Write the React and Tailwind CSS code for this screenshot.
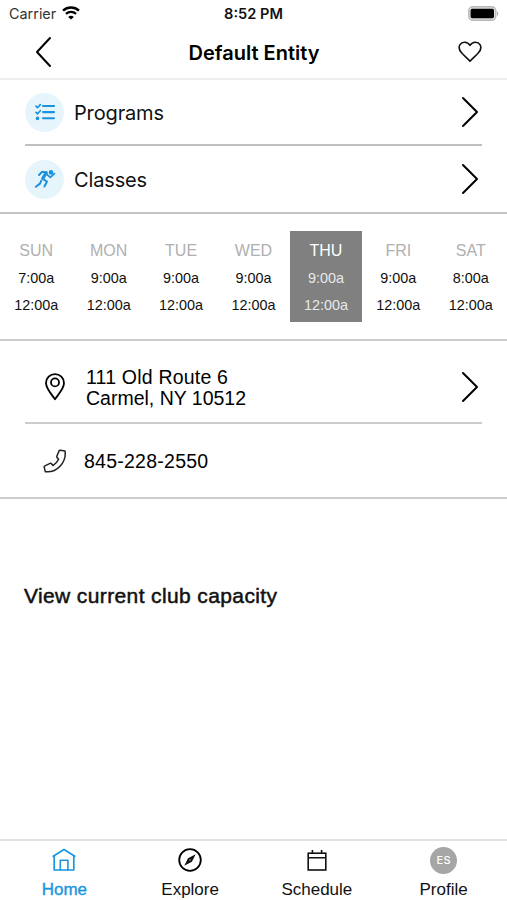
const HOURS = [
  { day: "SUN", open: "7:00a", close: "12:00a" },
  { day: "MON", open: "9:00a", close: "12:00a" },
  { day: "TUE", open: "9:00a", close: "12:00a" },
  { day: "WED", open: "9:00a", close: "12:00a" },
  { day: "THU", open: "9:00a", close: "12:00a", today: true },
  { day: "FRI", open: "9:00a", close: "12:00a" },
  { day: "SAT", open: "8:00a", close: "12:00a" },
]

const LINKS = [
  { label: "Programs", icon: ChecklistIcon, row: "h-[64px]" },
  { label: "Classes", icon: RunnerIcon, row: "h-[68px]" },
]

const TABS = [
  { label: "Home", icon: HomeIcon, active: true },
  { label: "Explore", icon: CompassIcon },
  { label: "Schedule", icon: CalendarIcon },
  { label: "Profile", icon: Avatar },
]

function WifiIcon() {
  return (
    <svg width="18" height="14" viewBox="0 0 18 14" fill="none" stroke="#000">
      <path d="M1 4.6C5.5 0.4 12.5 0.4 17 4.6" strokeWidth="2.4" />
      <path d="M3.9 7.9C6.8 5.3 11.2 5.3 14.1 7.9" strokeWidth="2.2" />
      <path d="M9 13.6 6.2 10.9C7.7 9.4 10.3 9.4 11.8 10.9Z" fill="#000" stroke="none" />
    </svg>
  )
}

function BatteryIcon() {
  return (
    <svg width="31" height="15" viewBox="0 0 31 15">
      <rect x="0.8" y="0.8" width="27" height="13.4" rx="4" fill="#ddd" stroke="#b8b8b8" strokeWidth="1.4" />
      <rect x="2.6" y="2.8" width="23.4" height="9.4" rx="1.6" fill="#000" />
      <path d="M29 5.2C30.7 5.8 30.7 9.2 29 9.8Z" fill="#aaa" />
    </svg>
  )
}

function HeartIcon() {
  return (
    <svg width="24" height="22" viewBox="0 0 24 22" fill="none" stroke="#111" strokeWidth="1.6" strokeLinejoin="round">
      <path d="M12 20.2C10.5 18.3 6.5 14.9 4 12.3C1.2 9.4 0.4 6.3 2 3.7C3.9 0.6 9.3 0.1 12 4.4C14.7 0.1 20.1 0.6 22 3.7C23.6 6.3 22.8 9.4 20 12.3C17.5 14.9 13.5 18.3 12 20.2Z" />
    </svg>
  )
}

function Chevron({ left }) {
  return (
    <svg width="18" height="32" viewBox="0 0 18 32" fill="none" stroke="#000" strokeWidth="2" strokeLinecap="round" strokeLinejoin="round">
      <path d={left ? "M15 2 2 16 15 30" : "M2 2 16 16 2 30"} />
    </svg>
  )
}

function ChecklistIcon() {
  return (
    <svg width="20" height="18" viewBox="0 0 20 18" fill="none" stroke="#1b93dd" strokeWidth="2.1" strokeLinecap="round" strokeLinejoin="round">
      <path d="M8 3H19M8 9.1H19M8 15.2H19" />
      <path d="M1 3.2 2.5 4.7 5.3 1.6M1 9.3 2.5 10.8 5.3 7.7" strokeWidth="1.7" />
      <circle cx="2.5" cy="15.4" r="1.8" fill="#1b93dd" stroke="none" />
    </svg>
  )
}

function RunnerIcon() {
  return (
    <svg width="22" height="20" viewBox="0 0 22 20" fill="none" stroke="#1b93dd" strokeWidth="2" strokeLinecap="round" strokeLinejoin="round">
      <circle cx="17" cy="3.4" r="2.3" fill="#1b93dd" stroke="none" />
      <path d="M5 6 8.2 2.8 12.6 3.4" />
      <path d="M12.2 3.8 8.8 9.4" strokeWidth="3.2" />
      <path d="M9 10 13 12.6 10.4 17.4" />
      <path d="M7.3 11.6 6 14.6 1.8 17.8" />
      <path d="M13.4 5.8 16.3 8.4 20.4 4.6" strokeWidth="1.8" />
    </svg>
  )
}

function PinIcon() {
  return (
    <svg width="20" height="28" viewBox="0 0 20 28" fill="none" stroke="#000" strokeWidth="1.8" strokeLinejoin="round">
      <path d="M10 26.3C7.8 22.7 1 16.2 1 10.1A9 9 0 0 1 19 10.1C19 16.2 12.2 22.7 10 26.3Z" />
      <circle cx="10" cy="9.4" r="4" />
    </svg>
  )
}

function PhoneIcon() {
  return (
    <svg width="24" height="24" viewBox="0 0 24 24" fill="none" stroke="#222" strokeWidth="1.5" strokeLinejoin="round">
      <path d="M17.3 1.2 22 2C23.8 12.8 14.2 24 2.3 22.7L1.2 18.1C1.1 17.4 1.3 17.1 1.9 16.9L7 14.4C7.7 14.1 8.2 14.3 8.5 14.8L9.9 16.6C12.4 15.2 14.3 13.1 15.6 10.3L14.1 8.5C13.7 8 13.7 7.5 13.9 7L16 2.1C16.2 1.4 16.6 1.1 17.3 1.2Z" />
    </svg>
  )
}

function HomeIcon() {
  return (
    <svg width="24" height="24" viewBox="0 0 24 24" fill="none" stroke="#1b97e0" strokeWidth="1.7" strokeLinejoin="round" strokeLinecap="round">
      <path d="M1.2 8.3 12 1.5 22.8 8.3M2.2 8V22H21.8V8" />
      <path d="M8.3 22V12.2H15.9V22" strokeWidth="1.6" />
    </svg>
  )
}

function CompassIcon() {
  return (
    <svg width="24" height="24" viewBox="0 0 24 24" fill="none" stroke="#000" strokeWidth="1.8">
      <circle cx="12" cy="12" r="10.8" />
      <path d="M17.7 6.2 13.9 13.8 6.3 17.8 10 10.2Z" fill="#111" stroke="none" />
      <circle cx="12" cy="12" r="0.8" fill="#999" stroke="none" />
    </svg>
  )
}

function CalendarIcon() {
  return (
    <svg width="20" height="22" viewBox="0 0 20 22" fill="none" stroke="#111" strokeWidth="1.6">
      <rect x="1.2" y="4.2" width="17.6" height="16.8" />
      <path d="M1.2 8.8H18.8M5.4 1V5M14.6 1V5" />
    </svg>
  )
}

function Avatar() {
  return (
    <span className="flex h-[27px] w-[27px] items-center justify-center rounded-full bg-[#a6a6a6] font-['Inter',sans-serif] text-[11px] font-medium tracking-[0.2px] text-white">
      ES
    </span>
  )
}

export default function App() {
  return (
    <div className="flex h-[900px] w-[507px] flex-col overflow-hidden bg-white font-['Liberation_Sans',Arial,sans-serif] text-black">

      {/* Status bar */}
      <div className="grid h-[26px] grid-cols-3 items-center pl-[8px] pr-[8px] font-['Inter',sans-serif] text-[14.4px]">
        <div className="flex items-center gap-[6px] pl-px text-[#333]">
          <span className="pt-[2px]">Carrier</span>
          <WifiIcon />
        </div>
        <span className="pt-[3px] text-center text-[14.6px] font-semibold text-[#111]">8:52 PM</span>
        <div className="flex justify-end">
          <BatteryIcon />
        </div>
      </div>

      {/* Header */}
      <header className="flex h-[54px] items-center justify-between border-b-2 border-[#eee] pl-[35px] pr-[25px]">
        <Chevron left />
        <h1 className="mr-[3px] pt-px font-['Inter',sans-serif] text-[20px] font-semibold">Default Entity</h1>
        <HeartIcon />
      </header>

      {/* Section links */}
      <section className="border-b-2 border-[#c4c4c4] px-[25px]">
        {LINKS.map(({ label, icon: Icon, row }, i) => (
          <div key={label} className={`flex items-center pr-[3px] ${row} ${i > 0 ? "border-t-2 border-[#c0c0c0]" : ""}`}>
            <span className="flex h-[39px] w-[39px] items-center justify-center rounded-full bg-[#e6f5fc]">
              <Icon />
            </span>
            <span className="ml-[10px] flex-1 pt-px font-['Inter',sans-serif] text-[20px] tracking-[-0.15px] text-[#111]">{label}</span>
            <Chevron />
          </div>
        ))}
      </section>

      {/* Opening hours */}
      <section className="grid h-[127px] grid-cols-7 border-b-2 border-[#ccc] pt-[17px]">
        {HOURS.map(({ day, open, close, today }) => (
          <div
            key={day}
            className={`flex h-[91px] flex-col items-center pt-[6px] text-[14.4px] leading-[27px] ${
              today ? "bg-[#808080] text-[#e8e8e8]" : "text-[#111]"
            }`}
          >
            <span className={`text-[16px] ${today ? "text-white" : "text-[#b0b0b0]"}`}>{day}</span>
            <span className="pt-px">{open}</span>
            <span>{close}</span>
          </div>
        ))}
      </section>

      {/* Contact */}
      <section className="border-b-2 border-[#ccc] px-[25px] text-[19.5px]">
        <div className="flex h-[83px] items-center border-b-2 border-[#ccc] pr-[3px] pt-[10px]">
          <span className="ml-5 w-[41px]"><PinIcon /></span>
          <p className="flex-1 pt-[3px] leading-[21px]">
            <span className="tracking-[0.2px]">111 Old Route 6</span>
            <br />
            Carmel, NY 10512
          </p>
          <Chevron />
        </div>
        <div className="flex h-[73px] items-center">
          <span className="ml-[18px] w-[41px]"><PhoneIcon /></span>
          <span className="pt-[2px] tracking-[0.25px]">845-228-2550</span>
        </div>
      </section>

      <main className="flex-1 px-6 pt-[83px]">
        <p className="text-[21px] leading-[28px] tracking-[0.38px] text-[#111] [-webkit-text-stroke:0.5px_#111]">View current club capacity</p>
      </main>

      {/* Tab bar */}
      <nav className="grid h-[61px] grid-cols-4 border-t-2 border-[#e2e2e2]">
        {TABS.map(({ label, icon: Icon, active }) => (
          <div key={label} className={`flex flex-col items-center pt-[5px] ${active ? "pl-[2px]" : ""}`}>
            <span className="flex h-[28px] items-center"><Icon /></span>
            <span
              className={`mt-[5px] text-[17px] leading-[22px] ${
                active ? "text-[#1b97e0] [-webkit-text-stroke:0.4px_#1b97e0]" : "text-[#111]"
              }`}
            >
              {label}
            </span>
          </div>
        ))}
      </nav>
    </div>
  )
}
